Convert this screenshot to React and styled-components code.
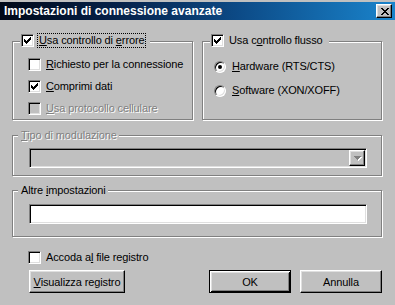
import React from 'react';
import styled, { createGlobalStyle, css } from 'styled-components';

const Global = createGlobalStyle`
  html, body { margin: 0; padding: 0; background: #c0c0c0; }
  body {
    font-family: "Liberation Sans", Arial, sans-serif;
    font-size: 11px;
    letter-spacing: -0.12px;
    color: #000;
  }
  * { box-sizing: border-box; }
`;

const CHECK = ['......X', '.....XX', 'X...XXX', 'XX.XXX.', 'XXXXX..', '.XXX...', '..X....'];
const CROSS = ['XX....XX', '.XX..XX.', '..XXXX..', '...XX...', '..XXXX..', '.XX..XX.', 'XX....XX'];
const ARROW = ['XXXXXXX', '.XXXXX.', '..XXX..', '...X...'];

function Pixels({ pattern, color, shadow }) {
  const w = pattern[0].length + (shadow ? 1 : 0);
  const h = pattern.length + (shadow ? 1 : 0);
  const rects = (dx, dy, fill, key) =>
    pattern.flatMap((row, y) =>
      row.split('').map((c, x) =>
        c === 'X' ? <rect key={`${key}${x}-${y}`} x={x + dx} y={y + dy} width="1" height="1" fill={fill} /> : null
      )
    );
  return (
    <svg width={w} height={h} viewBox={`0 0 ${w} ${h}`} shapeRendering="crispEdges" style={{ display: 'block' }}>
      {shadow && rects(1, 1, shadow, 's')}
      {rects(0, 0, color, 'm')}
    </svg>
  );
}

const Window = styled.div`
  width: 395px;
  height: 305px;
  padding-top: 2px;
  background: #c0c0c0;
  overflow: hidden;
`;

const TitleBar = styled.div`
  height: 18px;
  display: flex;
  align-items: center;
  justify-content: space-between;
  padding: 0 3px 0 4px;
  background: linear-gradient(90deg, #000818 0%, #06224a 30%, #0c4a86 60%, #1a84cc 100%);
`;

const Title = styled.span`
  color: #fff;
  font-weight: bold;
  font-size: 12px;
  letter-spacing: 0;
  line-height: 14px;
`;

const raised = css`
  border: 1px solid;
  border-color: #fff #000 #000 #fff;
  box-shadow: inset -1px -1px 0 #808080, inset 1px 1px 0 #dfdfdf;
  background: #c0c0c0;
`;

const sunken = css`
  border: 1px solid;
  border-color: #808080 #fff #fff #808080;
  box-shadow: inset 1px 1px 0 #000, inset -1px -1px 0 #dfdfdf;
`;

const CloseButton = styled.div`
  ${raised};
  width: 16px;
  height: 14px;
  display: flex;
  align-items: center;
  justify-content: center;
  padding-left: 1px;
`;

const Content = styled.div`
  padding: 21px 13px 0 12px;
  display: flex;
  flex-direction: column;
`;

const TopRow = styled.div`
  display: grid;
  grid-template-columns: 181px 180px;
  column-gap: 9px;
`;

const Group = styled.div`
  position: relative;
  border: 1px solid #808080;
  box-shadow: 1px 1px 0 #fff, inset 1px 1px 0 #fff;
  height: ${(p) => p.$height}px;
  margin-top: ${(p) => p.$mt || 0}px;
  padding: ${(p) => p.$pad};
  display: flex;
  flex-direction: column;
  gap: ${(p) => p.$gap || 0}px;
`;

const Legend = styled.div`
  position: absolute;
  top: ${(p) => p.$top}px;
  left: ${(p) => p.$left}px;
  display: flex;
  align-items: center;
  gap: 3px;
  padding: 0 ${(p) => p.$padR ?? 1}px 0 1px;
  background: #c0c0c0;
  line-height: 14px;
`;

const Box = styled.span`
  ${sunken};
  width: 13px;
  height: 13px;
  flex: none;
  display: flex;
  align-items: center;
  justify-content: center;
  background: ${(p) => (p.$disabled ? '#c0c0c0' : '#fff')};
`;

const Label = styled.span`
  white-space: nowrap;
  line-height: 13px;
  padding: 0 1px;
  border: 1px dotted ${(p) => (p.$focus ? '#000' : 'transparent')};
  color: ${(p) => (p.$disabled ? '#808080' : '#000')};
  text-shadow: ${(p) => (p.$disabled ? '1px 1px 0 #fff' : 'none')};
  u { text-decoration: underline; text-underline-offset: 1px; }
`;

const Row = styled.div`
  display: flex;
  align-items: center;
  height: 13px;
  gap: ${(p) => p.$gap ?? 3}px;
  margin-top: ${(p) => p.$mt || 0}px;
  margin-left: ${(p) => p.$ml || 0}px;
`;

const RadioCircle = styled.span`
  width: 12px;
  height: 12px;
  flex: none;
  border-radius: 50%;
  border: 1px solid;
  border-color: #808080 #fff #fff #808080;
  box-shadow: inset 1px 1px 0 #000, inset -1px -1px 0 #dfdfdf;
  background: #fff;
  display: flex;
  align-items: center;
  justify-content: center;
  &::after {
    content: '';
    width: 4px;
    height: 4px;
    border-radius: 50%;
    background: ${(p) => (p.$checked ? '#000' : 'transparent')};
  }
`;

const Combo = styled.div`
  ${sunken};
  width: 338px;
  height: 20px;
  background: #c0c0c0;
  display: flex;
  justify-content: flex-end;
  align-items: center;
  padding-right: 1px;
`;

const DropButton = styled.div`
  ${raised};
  width: 16px;
  height: 16px;
  display: flex;
  align-items: center;
  justify-content: center;
  padding: 1px 0 0 1px;
`;

const TextField = styled.div`
  ${sunken};
  width: 338px;
  height: 20px;
  background: #fff;
`;

const ButtonRow = styled.div`
  display: flex;
  align-items: center;
  margin-top: 6px;
  padding-left: 17px;
`;

const Button = styled.div`
  ${raised};
  width: ${(p) => p.$w}px;
  height: 23px;
  display: flex;
  align-items: center;
  justify-content: center;
  margin-left: ${(p) => p.$ml || '0px'};
  ${(p) =>
    p.$default &&
    css`
      border: 1px solid #000;
      box-shadow: inset 1px 1px 0 #fff, inset -1px -1px 0 #000, inset 2px 2px 0 #dfdfdf, inset -2px -2px 0 #808080;
    `}
`;

function Check({ checked, disabled }) {
  return (
    <Box $disabled={disabled}>
      {checked && <Pixels pattern={CHECK} color={disabled ? '#808080' : '#000'} />}
    </Box>
  );
}

export default function App() {
  return (
    <>
      <Global />
      <Window>
        <TitleBar>
          <Title>Impostazioni di connessione avanzate</Title>
          <CloseButton>
            <Pixels pattern={CROSS} color="#000" />
          </CloseButton>
        </TitleBar>
        <Content>
          <TopRow>
            <Group $height={79} $pad="16px 0 0 15px" $gap={9}>
              <Legend $top={-9} $left={7} $padR={4}>
                <Check checked />
                <Label $focus>
                  <u>U</u>sa controllo di <u>e</u>rrore
                </Label>
              </Legend>
              <Row>
                <Check />
                <Label>
                  <u>R</u>ichiesto per la connessione
                </Label>
              </Row>
              <Row>
                <Check checked />
                <Label>
                  <u>C</u>omprimi dati
                </Label>
              </Row>
              <Row>
                <Check disabled />
                <Label $disabled>
                  <u>U</u>sa protocollo cellulare
                </Label>
              </Row>
            </Group>
            <Group $height={79} $pad="18px 0 0 11px" $gap={11}>
              <Legend $top={-9} $left={7} $padR={4}>
                <Check checked />
                <Label>
                  Usa c<u>o</u>ntrollo flusso
                </Label>
              </Legend>
              <Row $gap={4}>
                <RadioCircle $checked />
                <Label>
                  <u>H</u>ardware (RTS/CTS)
                </Label>
              </Row>
              <Row $gap={4}>
                <RadioCircle />
                <Label>
                  <u>S</u>oftware (XON/XOFF)
                </Label>
              </Row>
            </Group>
          </TopRow>

          <Group $height={41} $mt={15} $pad="12px 0 0 16px">
            <Legend $top={-8} $left={5} $padR={0}>
              <Label $disabled>
                <u>T</u>ipo di modulazione
              </Label>
            </Legend>
            <Combo>
              <DropButton>
                <Pixels pattern={ARROW} color="#808080" shadow="#fff" />
              </DropButton>
            </Combo>
          </Group>

          <Group $height={47} $mt={14} $pad="13px 0 0 16px">
            <Legend $top={-8} $left={5} $padR={0}>
              <Label>
                Altre <u>i</u>mpostazioni
              </Label>
            </Legend>
            <TextField />
          </Group>

          <Row $mt={14} $ml={16}>
            <Check />
            <Label>
              Accoda a<u>l</u> file registro
            </Label>
          </Row>

          <ButtonRow>
            <Button $w={96}>
              <span>
                <u>V</u>isualizza registro
              </span>
            </Button>
            <Button $w={82} $ml="auto" $default>
              OK
            </Button>
            <Button $w={82} $ml="9px">
              Annulla
            </Button>
          </ButtonRow>
        </Content>
      </Window>
    </>
  );
}
